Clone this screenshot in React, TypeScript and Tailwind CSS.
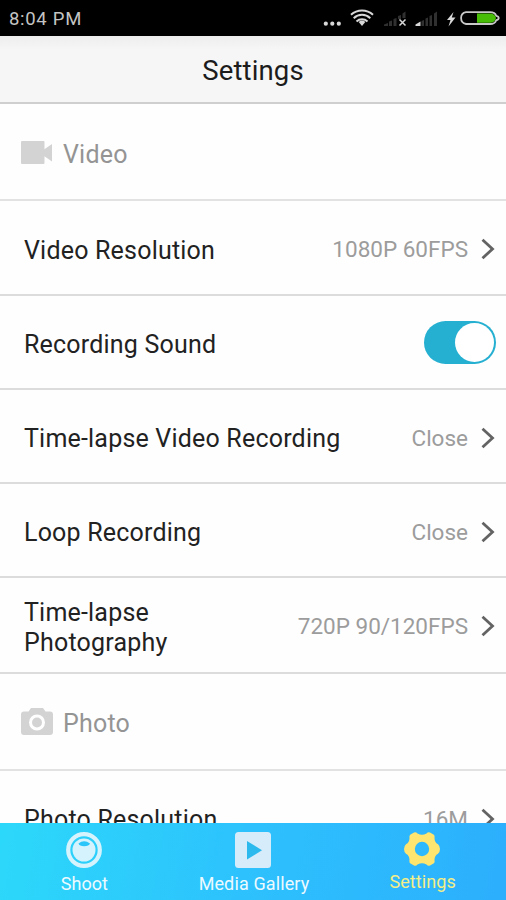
import type { ReactNode } from "react";

function Chevron() {
  return (
    <svg className="ml-[13px] h-[22px] w-[14px] shrink-0" viewBox="0 0 14 22" fill="none" stroke="#636363" strokeWidth="2.8">
      <path d="M1.500 1.800 11.500 11 1.500 20.200" />
    </svg>
  );
}

function Row({ label, value, height, children }: { label: string; value?: string; height: string; children?: ReactNode }) {
  return (
    <div className={`flex shrink-0 items-center justify-between border-b-2 border-[#dcdcdc] pl-6 pr-[11px] ${height}`}>
      <span className="whitespace-pre-line pt-[3px] text-[25px] leading-[30px] tracking-[0.2px] text-[#222]">{label}</span>
      {children ?? (
        <span className="flex items-center text-[22.5px] leading-[30px] text-[#9c9c9c]">
          {value}
          <Chevron />
        </span>
      )}
    </div>
  );
}

function Section({ icon, label, height }: { icon: ReactNode; label: string; height: string }) {
  return (
    <div className={`flex shrink-0 items-center gap-[10px] border-b-2 border-[#e2e2e2] pl-[21px] ${height}`}>
      {icon}
      <span className="pt-[4px] text-[25px] leading-[30px] tracking-[0.2px] text-[#949494]">{label}</span>
    </div>
  );
}

function StatusBar() {
  return (
    <div className="flex h-9 shrink-0 items-center justify-between bg-black pl-[9px]">
      <span className="pt-[3px] text-[18.5px] tracking-[0.7px] text-[#c4c4c4]">8:04 PM</span>
      <svg className="h-9 w-[196px]" viewBox="0 0 196 36">
        <g fill="#d8d8d8">
          <circle cx="15.800" cy="23.700" r="2.100" />
          <circle cx="22.300" cy="23.700" r="2.100" />
          <circle cx="28.800" cy="23.700" r="2.100" />
          <path d="m52 26-3.300-4a5 5 0 0 1 6.600 0z" />
          <path d="m143.500 12-6.500 8h3.500l-2 6.500 7-9h-3.700z" />
          <path d="m105.500 24.500 5-3V26h-5z" />
        </g>
        <g fill="none" stroke="#d8d8d8" strokeWidth="2">
          <path d="M41 14.800a16 16 0 0 1 22 0M43.700 18.200a12 12 0 0 1 16.600 0M46.500 21.500a8 8 0 0 1 11 0" />
          <path d="m89.500 19.500 6 6m0-6-6 6" strokeWidth="1.500" />
        </g>
        <g fill="#303030">
          <path d="M74 24.500 78 23v3h-4zM79 21.500l3-1V26h-3zM83.500 19l3-1v8h-3zM88 16l3-1v4h-3zM92.500 13.500l3-2V18h-3z" />
          <path d="M111.500 21l2.500-1v6h-2.500zM115.500 18.500l2.500-1V26h-2.500zM119.500 16l2.500-1v11h-2.500zM124 13.500l3-2V26h-3z" />
        </g>
        <path d="M156 12.200h24q5 0 6.200 3.600 2.500.4 2.500 2.200t-2.500 2.200q-1.200 3.800-6.200 3.800h-24a6 6 0 0 1 0-11.800z" fill="none" stroke="#c8c8c8" strokeWidth="1.800" />
        <path d="M167 13.500h13q5 0 6 4.600-1 4.700-6 4.700h-13z" fill="#48bd08" />
      </svg>
    </div>
  );
}

function ShootIcon() {
  return (
    <svg className="size-9" viewBox="0 0 36 36">
      <circle cx="18" cy="18" r="15.800" fill="none" stroke="#d4f3fd" strokeWidth="4.200" />
      <circle cx="18" cy="18" r="11.500" fill="#d4f3fd" />
      <path d="M12.500 11.500q5.500-4.500 11.500 0-1 2.800-5.800 2.800t-5.700-2.800z" fill="#2bc6f9" />
    </svg>
  );
}

function GalleryIcon() {
  return (
    <svg className="size-9" viewBox="0 0 36 36">
      <rect width="36" height="36" rx="3.500" fill="#d6ecfa" />
      <path d="M12 9v18.500L27 18.300z" fill="#2bb9ee" />
    </svg>
  );
}

function GearIcon() {
  return (
    <svg className="h-[34px] w-9" viewBox="0 0 36 34">
      <path
        d="M10 .5Q12-.3 13.500 1.500Q18 4 22.500 1.500Q24-.3 26 .5L29.500 2.500Q31 3.500 30.500 6Q30.500 10.500 34 12.200Q36 14 36 17Q36 20 34 21.800Q30.500 23.500 30.500 28Q31 30.500 29.500 31.500L26 33.500Q24 34.300 22.500 32.500Q18 30 13.500 32.500Q12 34.300 10 33.500L6.500 31.500Q5 30.500 5.500 28Q5.500 23.500 2 21.800Q0 20 0 17Q0 14 2 12.200Q5.500 10.500 5.500 6Q5 3.500 6.500 2.500Z"
        fill="#fee570"
      />
      <circle cx="18" cy="17" r="7.200" fill="#2db9fb" />
    </svg>
  );
}

export default function App() {
  return (
    <div className="flex h-[900px] w-[506px] flex-col overflow-hidden bg-[#fefefe] font-[Roboto,sans-serif]">
      <StatusBar />
      <header className="flex h-[68px] shrink-0 items-center justify-center border-b-2 border-[#cfcfcf] bg-linear-to-b from-[#ededed] via-[#f6f6f6] via-20% to-[#f6f6f6] pt-[4px] text-[27.500px] tracking-[0.15px] text-[#1c1c1c]">
        Settings
      </header>
      <main className="flex min-h-0 flex-1 flex-col overflow-hidden">
        <Section
          height="h-[97px] pt-[2px]"
          label="Video"
          icon={
            <svg className="h-[23px] w-8" viewBox="0 0 32 23" fill="#d3d3d3">
              <rect width="23.500" height="23" rx="1" />
              <path d="M23 8.500 31 3v17.500L23 15z" />
            </svg>
          }
        />
        <Row height="h-[95px] pt-[3px]" label="Video Resolution" value="1080P 60FPS" />
        <Row height="h-[94px] pt-[3px]" label="Recording Sound">
          <span className="-mr-px -mt-[2px] flex h-[43px] w-[72px] items-center justify-end rounded-full bg-[#25afd1] pr-[2px]">
            <span className="size-[39px] rounded-full bg-white" />
          </span>
        </Row>
        <Row height="h-[94px] pt-[3px]" label="Time-lapse Video Recording" value="Close" />
        <Row height="h-[94px] pt-[3px]" label="Loop Recording" value="Close" />
        <Row height="h-[96px] pt-[2px]" label={"Time-lapse\nPhotography"} value="720P 90/120FPS" />
        <Section
          height="h-[97px]"
          label="Photo"
          icon={
            <svg className="h-[27px] w-8" viewBox="0 0 32 27">
              <path d="M10 0h12l2.500 3.500H29q3 0 3 3V24q0 3-3 3H3q-3 0-3-3V6.500q0-3 3-3h4.500z" fill="#d3d3d3" />
              <circle cx="16" cy="14.500" r="6.500" fill="none" stroke="#fefefe" strokeWidth="3" />
            </svg>
          }
        />
        <Row height="h-[96px] pt-px" label="Photo Resolution" value="16M" />
      </main>
      <nav className="grid h-[77px] shrink-0 grid-cols-3 bg-linear-[100deg] from-[#2cd8fa] via-[#2dc1fd] to-[#2caffd] text-[18px] leading-[22px] text-[#ecfaff]">
        <div className="flex flex-col items-center gap-[5px] pt-[9px]">
          <ShootIcon />
          <span>Shoot</span>
        </div>
        <div className="flex flex-col items-center gap-[5px] pt-[9px]">
          <GalleryIcon />
          <span className="pl-[2px] tracking-[0.12px]">Media Gallery</span>
        </div>
        <div className="flex flex-col items-center gap-[5px] pt-[9px] text-[#f3ee87]">
          <GearIcon />
          <span className="pl-[2px] tracking-[0.1px]">Settings</span>
        </div>
      </nav>
    </div>
  );
}
